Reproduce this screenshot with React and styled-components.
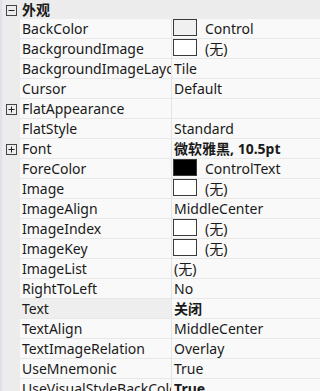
import React from 'react';
import styled, { createGlobalStyle } from 'styled-components';

const GlobalStyle = createGlobalStyle`
  html, body {
    margin: 0;
    padding: 0;
    background: #f9f9f9;
    overflow: hidden;
  }
  body {
    font-family: "Noto Sans", "Noto Sans CJK SC", sans-serif;
    font-size: 14px;
    color: #1a1a1a;
  }
`;

const StyledGrid = styled.div`
  width: 320px;
  height: 391px;
  overflow: hidden;
  background: #f9f9f9;
  border-left: 2px solid #dde1e8;
  box-sizing: border-box;
`;

const StyledCategory = styled.div`
  display: grid;
  grid-template-columns: 18px 1fr;
  height: 19px;
  background: #ececec;
  align-items: center;
`;

const StyledCategoryTitle = styled.span`
  font-weight: 700;
  font-size: 14px;
  line-height: 19px;
  padding-left: 2px;
`;

const StyledRow = styled.div`
  display: grid;
  grid-template-columns: 18px 152px 1fr;
  height: 20px;
`;

const StyledGutter = styled.div`
  background: #ececec;
  display: flex;
  align-items: center;
  justify-content: center;
  padding-left: 1px;
  padding-top: 1px;
`;

const StyledName = styled.div`
  box-sizing: border-box;
  border-right: 1px solid #e4e4e4;
  border-bottom: 1px solid #e8e8e8;
  background: ${({ selected }) => (selected ? '#eeeeee' : '#f9f9f9')};
  padding-left: 2px;
  line-height: 19px;
  white-space: nowrap;
  overflow: hidden;
`;

const StyledValue = styled.div`
  box-sizing: border-box;
  border-bottom: 1px solid #e8e8e8;
  display: flex;
  align-items: center;
  gap: 8px;
  padding-left: 2px;
  line-height: 19px;
  white-space: nowrap;
  overflow: hidden;
  font-weight: ${({ bold }) => (bold ? 700 : 400)};
`;

const StyledSwatch = styled.span`
  flex: none;
  box-sizing: border-box;
  width: 24px;
  height: 17px;
  margin-left: -1px;
  margin-top: -2px;
  border: 1px solid #3a3a3a;
  background: ${({ color }) => color};
`;

const ToggleIcon = ({ open }) => (
  <svg width="11" height="11" viewBox="0 0 11 11">
    <rect x="0.5" y="0.5" width="10" height="10" fill="none" stroke="#444" />
    <line x1="2.5" y1="5.5" x2="8.5" y2="5.5" stroke="#222" />
    {!open && <line x1="5.5" y1="2.5" x2="5.5" y2="8.5" stroke="#222" />}
  </svg>
);

const rows = [
  { name: 'BackColor', value: 'Control', swatch: '#f0f0f0' },
  { name: 'BackgroundImage', value: '(无)', swatch: '#ffffff' },
  { name: 'BackgroundImageLayout', value: 'Tile' },
  { name: 'Cursor', value: 'Default' },
  { name: 'FlatAppearance', value: '', expandable: true },
  { name: 'FlatStyle', value: 'Standard' },
  { name: 'Font', value: '微软雅黑, 10.5pt', expandable: true, bold: true },
  { name: 'ForeColor', value: 'ControlText', swatch: '#000000' },
  { name: 'Image', value: '(无)', swatch: '#ffffff' },
  { name: 'ImageAlign', value: 'MiddleCenter' },
  { name: 'ImageIndex', value: '(无)', swatch: '#ffffff' },
  { name: 'ImageKey', value: '(无)', swatch: '#ffffff' },
  { name: 'ImageList', value: '(无)' },
  { name: 'RightToLeft', value: 'No' },
  { name: 'Text', value: '关闭', bold: true, selected: true },
  { name: 'TextAlign', value: 'MiddleCenter' },
  { name: 'TextImageRelation', value: 'Overlay' },
  { name: 'UseMnemonic', value: 'True' },
  { name: 'UseVisualStyleBackColor', value: 'True', bold: true },
];

const App = () => (
  <>
    <GlobalStyle />
    <StyledGrid>
      <StyledCategory>
        <StyledGutter>
          <ToggleIcon open />
        </StyledGutter>
        <StyledCategoryTitle>外观</StyledCategoryTitle>
      </StyledCategory>
      {rows.map((row) => (
        <StyledRow key={row.name}>
          <StyledGutter>{row.expandable && <ToggleIcon />}</StyledGutter>
          <StyledName selected={row.selected}>{row.name}</StyledName>
          <StyledValue bold={row.bold}>
            {row.swatch && <StyledSwatch color={row.swatch} />}
            {row.value}
          </StyledValue>
        </StyledRow>
      ))}
    </StyledGrid>
  </>
);

export default App;
